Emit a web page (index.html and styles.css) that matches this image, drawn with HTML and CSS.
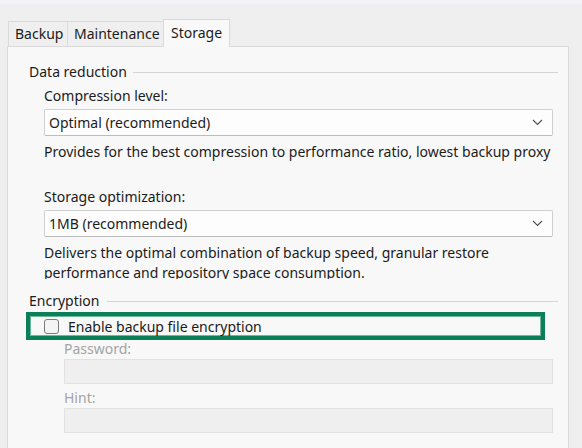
FILE: index.html
```html
<!DOCTYPE html>
<html>
<head>
<meta charset="utf-8">
<link rel="stylesheet" href="styles.css">
</head>
<body>
<div class="topstrip"></div>
<div class="tabs">
  <div class="tab">Backup</div>
  <div class="tab">Maintenance</div>
  <div class="tab active">Storage</div>
</div>
<div class="panel">
  <div class="legend"><span>Data reduction</span><div class="rule"></div></div>
  <div class="group">
    <div class="label l1">Compression level:</div>
    <div class="select"><span>Optimal (recommended)</span><svg class="chev" width="11" height="7" viewBox="0 0 11 7"><path d="M1 1 L5.5 5.5 L10 1" fill="none" stroke="#555" stroke-width="1.2"/></svg></div>
    <div class="desc">Provides for the best compression to performance ratio, lowest backup proxy</div>
    <div class="label l2">Storage optimization:</div>
    <div class="select"><span>1MB (recommended)</span><svg class="chev" width="11" height="7" viewBox="0 0 11 7"><path d="M1 1 L5.5 5.5 L10 1" fill="none" stroke="#555" stroke-width="1.2"/></svg></div>
    <div class="desc clip">Delivers the optimal combination of backup speed, granular restore performance and repository space consumption.</div>
  </div>
  <div class="legend enc"><span>Encryption</span><div class="rule"></div></div>
  <div class="highlight">
    <span class="check"></span><span>Enable backup file encryption</span>
  </div>
  <div class="sub">
    <div class="dlabel">Password:</div>
    <div class="field"></div>
    <div class="dlabel hint">Hint:</div>
    <div class="field"></div>
  </div>
</div>
</body>
</html>
```
FILE: styles.css
```css
html, body {
  margin: 0;
  padding: 0;
  background: #efefef;
  font-family: "Noto Sans", "Open Sans", sans-serif;
  font-size: 14px;
  color: #1b1b1b;
  height: 448px;
  overflow: hidden;
}
.topstrip {
  height: 4px;
  background: #f2f2f7;
}
.tabs {
  display: flex;
  align-items: flex-end;
  margin-top: 15px;
  padding-left: 8px;
  height: 28px;
  position: relative;
  z-index: 2;
}
.tab {
  height: 25px;
  box-sizing: border-box;
  border: 1px solid #dadada;
  border-bottom: none;
  border-right: none;
  background: #efefef;
  padding: 0 6px;
  line-height: 24px;
  margin-bottom: 1px;
}
.tab:nth-child(2) { width: 96px; }
.tab:first-child { width: 59px; }
.tab.active {
  height: 28px;
  width: 67px;
  background: #f9f9f9;
  border-right: 1px solid #dadada;
  margin-bottom: 0;
  line-height: 26px;
  padding: 0 7px;
}
.panel {
  margin-left: 7px;
  width: 562px;
  box-sizing: border-box;
  margin-top: -1px;
  border: 1px solid #dadada;
  background: #f8f8f8;
  height: 420px;
  padding-top: 15px;
  padding-left: 21px;
}
.legend {
  display: flex;
  align-items: center;
  height: 20px;
  line-height: 20px;
}
.legend .rule {
  flex: 1;
  height: 1px;
  background: #d5d5d5;
  margin-left: 6px;
  margin-right: 10px;
}
.group {
  padding-left: 15px;
  width: 509px;
}
.label {
  height: 20px;
  line-height: 20px;
}
.l1 { margin-top: 4px; }
.l2 { margin-top: 25px; }
.select {
  margin-top: 3px;
  height: 27px;
  box-sizing: border-box;
  border: 1px solid #cfcfcf;
  border-bottom-color: #bcbcbc;
  border-radius: 2px;
  background: #fdfdfd;
  display: flex;
  align-items: center;
  justify-content: space-between;
  padding: 0 9px 0 4px;
}
.chev { display: block; }
.desc {
  margin-top: 6px;
  line-height: 20px;
  white-space: nowrap;
}
.desc.clip {
  white-space: normal;
  height: 36px;
  overflow: hidden;
}
.enc { margin-top: 12px; }
.enc .rule { margin-left: 8px; }
.highlight {
  margin-top: 1px;
  margin-left: -3px;
  width: 519px;
  height: 28px;
  box-sizing: border-box;
  border: 4px solid #0b7f57;
  box-shadow: inset 0 0 0 1px #6fb79b;
  display: flex;
  align-items: center;
  padding-left: 14px;
}
.check {
  width: 15px;
  height: 15px;
  box-sizing: border-box;
  border: 1px solid #7b7b7b;
  border-radius: 3px;
  background: #f4f4f4;
  margin-right: 9px;
}
.sub {
  padding-left: 35px;
  width: 489px;
}
.dlabel {
  color: #a3a3a3;
  height: 18px;
  line-height: 18px;
}
.dlabel.hint { margin-top: 5px; }
.field {
  margin-top: 1px;
  height: 25px;
  box-sizing: border-box;
  border: 1px solid #e2e2e2;
  background: #efefef;
}
```
